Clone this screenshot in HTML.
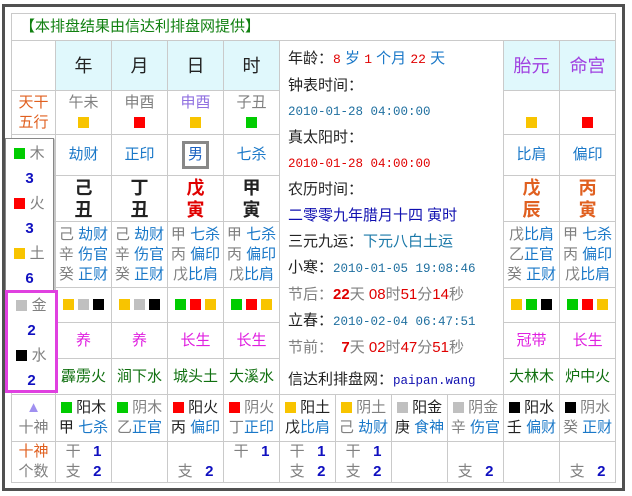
<!DOCTYPE html>
<html><head><meta charset="utf-8"><style>
*{margin:0;padding:0;box-sizing:border-box}
body{width:632px;height:496px;background:#fff;position:relative;overflow:hidden;font-family:"Liberation Sans","Noto Sans CJK SC",sans-serif;font-size:15px;color:#222}
.outer{position:absolute;left:2px;top:4px;width:623px;height:487px;border:3px solid #505050;border-right-width:3px}
table{position:absolute;left:11px;top:13px;border-collapse:collapse;table-layout:fixed;width:604px}
td{border:1px solid #cacaca;text-align:center;vertical-align:middle;padding:0;line-height:20px;overflow:hidden;white-space:nowrap}
.hd{background:#e0f8fc;font-size:18px}
.sq{display:inline-block;width:11px;height:11px;vertical-align:-1px}
.g{background:#00cc00}.r{background:#ff0000}.y{background:#f8c400}.s{background:#c0c0c0}.k{background:#000}
.bl{color:#1a78c8}.gr{color:#808080}.pu{color:#a040e0}.mg{color:#e020e0}.dg{color:#107010}.rd{color:#e00000}.or{color:#e06020}.nb{color:#1010c0;font-weight:bold}
.gz{font-size:18px;font-weight:bold;line-height:22px}
.info{text-align:left;vertical-align:top;padding:5px 0 0 8px;line-height:26px;font-size:15px}
.mono{font-family:"Liberation Mono",monospace;font-size:12.5px}
.leg{position:absolute;background:#fff}
</style></head><body>
<div class="outer"></div>
<table>
<colgroup><col style="width:44px"><col style="width:56px"><col style="width:56px"><col style="width:56px"><col style="width:56px"><col style="width:56px"><col style="width:56px"><col style="width:56px"><col style="width:56px"><col style="width:56px"><col style="width:56px"></colgroup>
<tr style="height:27px"><td colspan="11" style="text-align:left;padding-left:8px;color:#108010;font-size:15px">【本排盘结果由信达利排盘网提供】</td></tr>
<tr style="height:50px"><td></td><td class="hd">年</td><td class="hd">月</td><td class="hd">日</td><td class="hd">时</td>
<td colspan="4" rowspan="8" class="info">
<div>年龄：<span class="rd mono" style="font-size:13px">8</span> <span class="bl">岁</span> <span class="rd mono" style="font-size:13px">1</span> <span class="bl">个月</span> <span class="rd mono" style="font-size:13px">22</span> <span class="bl">天</span></div>
<div>钟表时间：</div>
<div class="mono" style="color:#2070a0">2010-01-28 04:00:00</div>
<div>真太阳时：</div>
<div class="mono rd">2010-01-28 04:00:00</div>
<div>农历时间：</div>
<div style="color:#1010b0">二零零九年腊月十四 寅时</div>
<div>三元九运：<span style="color:#1a78a8">下元八白土运</span></div>
<div>小寒：<span class="mono" style="color:#2070a0">2010-01-05 19:08:46</span></div>
<div class="gr">节后：<b class="rd">22</b>天 <span class="rd">08</span>时<span class="rd">51</span>分<span class="rd">14</span>秒</div>
<div>立春：<span class="mono" style="color:#2070a0">2010-02-04 06:47:51</span></div>
<div class="gr">节前： &nbsp;<b class="rd">7</b>天 <span class="rd">02</span>时<span class="rd">47</span>分<span class="rd">51</span>秒</div>
<div style="margin-top:6px">信达利排盘网：<span class="mono" style="color:#1010b0">paipan.wang</span></div>
</td>
<td class="hd pu">胎元</td><td class="hd pu">命宫</td></tr>
<tr style="height:44px"><td class="or">天干<br>五行</td><td class="gr">午未<br><span class="sq y"></span></td><td class="gr">申酉<br><span class="sq r"></span></td><td style="color:#9070e0">申酉<br><span class="sq y"></span></td><td class="gr">子丑<br><span class="sq g"></span></td><td><br><span class="sq y"></span></td><td><br><span class="sq r"></span></td></tr>
<tr style="height:41px"><td></td><td class="bl">劫财</td><td class="bl">正印</td><td><span style="display:inline-block;border:3px solid #888;padding:2px 3px;line-height:18px;color:#1a60c0">男</span></td><td class="bl">七杀</td><td class="bl">比肩</td><td class="bl">偏印</td></tr>
<tr style="height:46px"><td></td><td class="gz">己<br>丑</td><td class="gz">丁<br>丑</td><td class="gz rd">戊<br>寅</td><td class="gz">甲<br>寅</td><td class="gz or">戊<br>辰</td><td class="gz or">丙<br>寅</td></tr>
<tr style="height:66px"><td></td>
<td><span class="gr">己</span> <span class="bl">劫财</span><br><span class="gr">辛</span> <span class="bl">伤官</span><br><span class="gr">癸</span> <span class="bl">正财</span></td>
<td><span class="gr">己</span> <span class="bl">劫财</span><br><span class="gr">辛</span> <span class="bl">伤官</span><br><span class="gr">癸</span> <span class="bl">正财</span></td>
<td><span class="gr">甲</span> <span class="bl">七杀</span><br><span class="gr">丙</span> <span class="bl">偏印</span><br><span class="gr">戊</span><span class="bl">比肩</span></td>
<td><span class="gr">甲</span> <span class="bl">七杀</span><br><span class="gr">丙</span> <span class="bl">偏印</span><br><span class="gr">戊</span><span class="bl">比肩</span></td>
<td><span class="gr">戊</span><span class="bl">比肩</span><br><span class="gr">乙</span><span class="bl">正官</span><br><span class="gr">癸</span> <span class="bl">正财</span></td>
<td><span class="gr">甲</span> <span class="bl">七杀</span><br><span class="gr">丙</span> <span class="bl">偏印</span><br><span class="gr">戊</span><span class="bl">比肩</span></td></tr>
<tr style="height:35px"><td></td>
<td><span class="sq y"></span> <span class="sq s"></span> <span class="sq k"></span></td>
<td><span class="sq y"></span> <span class="sq s"></span> <span class="sq k"></span></td>
<td><span class="sq g"></span> <span class="sq r"></span> <span class="sq y"></span></td>
<td><span class="sq g"></span> <span class="sq r"></span> <span class="sq y"></span></td>
<td><span class="sq y"></span> <span class="sq g"></span> <span class="sq k"></span></td>
<td><span class="sq g"></span> <span class="sq r"></span> <span class="sq y"></span></td></tr>
<tr style="height:36px"><td></td><td class="mg">养</td><td class="mg">养</td><td class="mg">长生</td><td class="mg">长生</td><td class="mg">冠带</td><td class="mg">长生</td></tr>
<tr style="height:36px"><td></td><td class="dg">霹雳火</td><td class="dg">涧下水</td><td class="dg">城头土</td><td class="dg">大溪水</td><td class="dg">大林木</td><td class="dg">炉中火</td></tr>
<tr style="height:47px"><td class="gr"><span style="color:#a090f0">▲</span><br>十神</td>
<td><span class="sq g"></span> 阳木<br>甲 <span class="bl">七杀</span></td>
<td class="gr"><span class="sq g"></span> 阴木<br>乙<span class="bl">正官</span></td>
<td><span class="sq r"></span> 阳火<br>丙 <span class="bl">偏印</span></td>
<td class="gr"><span class="sq r"></span> 阴火<br>丁<span class="bl">正印</span></td>
<td><span class="sq y"></span> 阳土<br>戊<span class="bl">比肩</span></td>
<td class="gr"><span class="sq y"></span> 阴土<br>己 <span class="bl">劫财</span></td>
<td><span class="sq s"></span> 阳金<br>庚 <span class="bl">食神</span></td>
<td class="gr"><span class="sq s"></span> 阴金<br>辛 <span class="bl">伤官</span></td>
<td><span class="sq k"></span> 阳水<br>壬 <span class="bl">偏财</span></td>
<td class="gr"><span class="sq k"></span> 阴水<br>癸 <span class="bl">正财</span></td></tr>
<tr style="height:39px"><td><span class="or">十神</span><br><span class="gr">个数</span></td>
<td><span class="gr">干</span> &nbsp; <span class="nb">1</span><br><span class="gr">支</span> &nbsp; <span class="nb">2</span></td>
<td></td>
<td><br><span class="gr">支</span> &nbsp; <span class="nb">2</span></td>
<td><span class="gr">干</span> &nbsp; <span class="nb">1</span><br>&nbsp;</td>
<td><span class="gr">干</span> &nbsp; <span class="nb">1</span><br><span class="gr">支</span> &nbsp; <span class="nb">2</span></td>
<td><span class="gr">干</span> &nbsp; <span class="nb">1</span><br><span class="gr">支</span> &nbsp; <span class="nb">2</span></td>
<td></td>
<td><br><span class="gr">支</span> &nbsp; <span class="nb">2</span></td>
<td></td>
<td><br><span class="gr">支</span> &nbsp; <span class="nb">2</span></td></tr>
</table>
<div class="leg" style="left:5px;top:138px;width:49px;height:156px;border:1px solid #888;box-shadow:1px 1px 1px #bbb;text-align:center;line-height:25px">
<div style="margin-top:2px"><span class="sq g"></span> <span class="gr">木</span></div><div class="nb">3</div>
<div><span class="sq r"></span> <span class="gr">火</span></div><div class="nb">3</div>
<div><span class="sq y"></span> <span class="gr">土</span></div><div class="nb">6</div>
</div>
<div class="leg" style="left:5px;top:290px;width:53px;height:103px;border:3px solid #e040e0;text-align:center;line-height:25px">
<div><span class="sq s"></span> <span class="gr">金</span></div><div class="nb">2</div>
<div><span class="sq k"></span> <span class="gr">水</span></div><div class="nb">2</div>
</div>
</body></html>
